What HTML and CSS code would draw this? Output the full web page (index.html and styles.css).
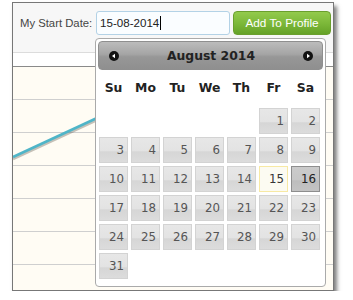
FILE: index.html
```html
<!DOCTYPE html>
<html lang="en">
<head>
  <meta charset="UTF-8">
  <title>Start Date</title>
  <link rel="stylesheet" href="styles.css">
</head>
<body>
  <div class="frame">
    <div class="toolbar">
      <label class="field-label" for="start">My Start Date:</label>
      <div class="date-input" id="start">15-08-2014<span class="caret"></span></div>
      <a href="#" class="btn add-btn">Add To Profile</a>
    </div>
    <div class="strip"></div>
    <div class="chart">
      <svg width="320" height="223" viewBox="0 0 320 223">
        <line x1="0" y1="92" x2="140" y2="27" stroke="rgba(90,80,70,0.35)" stroke-width="2.5"/>
        <line x1="0" y1="90" x2="140" y2="25" stroke="#4fb5c8" stroke-width="2.5"/>
      </svg>
    </div>

    <!-- datepicker popup -->
    <div class="picker">
      <div class="picker-head">
        <span class="nav prev">
          <svg width="10" height="10" viewBox="0 0 10 10"><circle cx="5" cy="5" r="5" fill="#111"/><polygon points="3,5 6,2.8 6,7.2" fill="#fff"/></svg>
        </span>
        <span class="month">August 2014</span>
        <span class="nav next">
          <svg width="10" height="10" viewBox="0 0 10 10"><circle cx="5" cy="5" r="5" fill="#111"/><polygon points="7,5 4,2.8 4,7.2" fill="#fff"/></svg>
        </span>
      </div>
      <div class="weekdays">
        <span>Su</span><span>Mo</span><span>Tu</span><span>We</span><span>Th</span><span>Fr</span><span>Sa</span>
      </div>
      <div class="days">
        <span class="blank"></span><span class="blank"></span><span class="blank"></span><span class="blank"></span><span class="blank"></span>
        <a class="day">1</a><a class="day">2</a>
        <a class="day">3</a><a class="day">4</a><a class="day">5</a><a class="day">6</a><a class="day">7</a><a class="day">8</a><a class="day">9</a>
        <a class="day">10</a><a class="day">11</a><a class="day">12</a><a class="day">13</a><a class="day">14</a><a class="day today">15</a><a class="day active">16</a>
        <a class="day">17</a><a class="day">18</a><a class="day">19</a><a class="day">20</a><a class="day">21</a><a class="day">22</a><a class="day">23</a>
        <a class="day">24</a><a class="day">25</a><a class="day">26</a><a class="day">27</a><a class="day">28</a><a class="day">29</a><a class="day">30</a>
        <a class="day">31</a>
      </div>
    </div>
  </div>
</body>
</html>
```

FILE: styles.css
```css
* {
  margin: 0;
  padding: 0;
  box-sizing: border-box;
}

body {
  background-color: #fff;
  font-family: "Liberation Sans", Arial, sans-serif;
}

.frame {
  position: relative;
  margin: 2px 0 0 12px;
  width: 322px;
  height: 289px;
  border: 1px solid #777;
  box-shadow: 3px 4px 4px rgba(0, 0, 0, 0.5);
  background-color: #fff;
}

.toolbar {
  display: flex;
  align-items: flex-start;
  height: 50px;
  padding: 8px 0 0 7px;
  background-color: #f7f7f7;
  border-bottom: 1px solid #dcdcdc;
}

.field-label {
  font-size: 11.3px;
  color: #454545;
  line-height: 24px;
  width: 76px;
}

.date-input {
  width: 134px;
  height: 24px;
  border: 1px solid #b3d2e6;
  border-radius: 3px;
  background-color: #fafdff;
  font-size: 11.6px;
  color: #222;
  line-height: 22px;
  padding-left: 3px;
}

.caret {
  display: inline-block;
  width: 1px;
  height: 14px;
  background-color: #000;
  vertical-align: -3px;
  margin-left: 1px;
}

.btn {
  text-decoration: none;
  cursor: pointer;
}

.add-btn {
  margin-left: 3px;
  width: 98px;
  height: 24px;
  border: 1px solid #6a9f2d;
  border-radius: 4px;
  background: linear-gradient(to bottom, #93ca4c 0%, #7db93a 50%, #65a227 100%);
  color: #fff;
  font-size: 11.8px;
  line-height: 22px;
  text-align: center;
}

.strip {
  height: 14px;
  border-bottom: 1px solid #8a8a8a;
}

.chart {
  height: 223px;
  background-color: #fffcf4;
  background-image: repeating-linear-gradient(to bottom, transparent 0, transparent 32px, #cfcfcf 32px, #cfcfcf 33px);
}

.chart svg {
  display: block;
}

/* datepicker */
.picker {
  position: absolute;
  left: 82px;
  top: 35px;
  width: 231px;
  padding: 2px 2px 7px 2px;
  background-color: #fff;
  border: 1px solid #aaa;
  border-radius: 4px;
  font-family: "DejaVu Sans", Verdana, sans-serif;
}

.picker-head {
  display: flex;
  align-items: center;
  justify-content: space-between;
  height: 29px;
  padding: 0 9px 0 10px;
  border: 1px solid #8f8f8f;
  border-radius: 4px;
  background: linear-gradient(to bottom, #bcbcbc 0%, #a5a5a5 45%, #979797 55%, #8f8f8f 100%);
}

.nav {
  display: flex;
  width: 10px;
  height: 10px;
}

.month {
  font-size: 12.4px;
  font-weight: bold;
  color: #222;
}

.weekdays,
.days {
  display: grid;
  grid-template-columns: repeat(7, 29px);
  column-gap: 3px;
  padding-left: 1px;
}

.weekdays {
  height: 36px;
  line-height: 36px;
  text-align: center;
  font-size: 12.4px;
  font-weight: bold;
  color: #222;
}

.days {
  margin-top: 2px;
  row-gap: 3px;
  grid-auto-rows: 26px;
}

.day {
  display: block;
  border: 1px solid #d3d3d3;
  background: linear-gradient(to bottom, #e7e7e7 0%, #e3e3e3 52%, #d6d6d6 58%, #dcdcdc 100%);
  color: #555;
  font-size: 11.8px;
  line-height: 24px;
  text-align: right;
  padding-right: 3px;
}

.day.today {
  border-color: #f7e9a4;
  background: #fcfbf2;
  color: #363636;
}

.day.active {
  border-color: #8e8e8e;
  background: linear-gradient(to bottom, #cbcbcb 0%, #c7c7c7 52%, #bdbdbd 58%, #c3c3c3 100%);
  color: #212121;
}
```
